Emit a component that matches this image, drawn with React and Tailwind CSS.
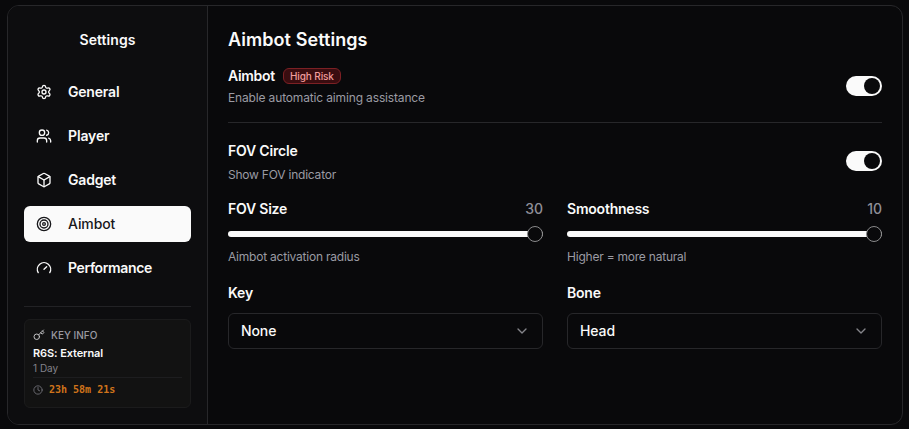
import { useState } from "react";
import { Settings, Users, Box, Target, Gauge, Key, Clock, ChevronDown } from "lucide-react";

const tabs = [
  { name: "General", icon: Settings, text: "tracking-[-0.2px]" },
  { name: "Player", icon: Users, text: "tracking-[-0.15px]" },
  { name: "Gadget", icon: Box, text: "tracking-[-0.2px]" },
  { name: "Aimbot", icon: Target, text: "tracking-[-0.1px]" },
  { name: "Performance", icon: Gauge, text: "tracking-[-0.38px]" },
];

const Toggle = ({ checked, onChange }) => (
  <button
    role="switch"
    aria-checked={checked}
    onClick={() => onChange(!checked)}
    className={`flex h-5 w-9 items-center rounded-full px-0.5 ${checked ? "justify-end bg-[#fafafa]" : "justify-start bg-[#27272a]"}`}
  >
    <span className="size-4 rounded-full bg-[#09090b]" />
  </button>
);

const SliderField = ({ label, value, max, hint }) => (
  <div className="flex flex-col">
    <div className="flex h-5 items-center justify-between text-sm">
      <span className="font-semibold tracking-[-0.22px]">{label}</span>
      <span className="font-medium text-[#8f8f98]">{value}</span>
    </div>
    <div className="relative mt-[7px] flex h-4 items-center">
      <div className="h-1.5 w-full overflow-hidden rounded-full bg-[#27272a]">
        <div className="h-full bg-[#fafafa]" style={{ width: `${(value / max) * 100}%` }} />
      </div>
      <span className="absolute right-0 size-4 rounded-full border border-[#8a8a8b] bg-[#09090b]" />
    </div>
    <p className="mt-[7px] h-4 text-xs leading-4 tracking-[-0.22px] text-[#9b9ba3]">{hint}</p>
  </div>
);

const SelectField = ({ label, value }) => (
  <div className="flex flex-col">
    <span className="h-5 text-sm leading-5 font-semibold tracking-[-0.2px]">{label}</span>
    <button className="mt-2.5 flex h-9 items-center justify-between rounded-md border border-[#27272a] px-3 text-sm font-medium tracking-[-0.1px]">
      {value}
      <ChevronDown size={16} className="text-[#85858a]" />
    </button>
  </div>
);

export default function App() {
  const [active, setActive] = useState("Aimbot");
  const [aimbot, setAimbot] = useState(true);
  const [fovCircle, setFovCircle] = useState(true);

  return (
    <div className="h-[429px] w-[909px] bg-[#09090b] pt-[5px] pl-[7px] font-['Inter',sans-serif] text-[#fafafa]">
      <div className="flex h-[420px] w-[896px] overflow-hidden rounded-xl border border-[#27272a]">
        <aside className="flex w-[200px] shrink-0 flex-col border-r border-[#27272a] bg-[#0d0d0f] px-4">
          <h2 className="mt-6 h-5 text-center text-sm leading-5 font-semibold tracking-[0.05px]">Settings</h2>
          <nav className="mt-6 flex flex-col gap-2">
            {tabs.map(({ name, icon: Icon, text }) => (
              <button
                key={name}
                onClick={() => setActive(name)}
                className={`flex h-9 items-center gap-4 rounded-md px-3 text-sm ${active === name ? "bg-[#fafafa] font-medium text-[#18181b]" : "font-semibold"}`}
              >
                <Icon size={16} />
                <span className={text}>{name}</span>
              </button>
            ))}
          </nav>
          <div className="mt-5 border-t border-[#222225] pt-3">
            <div className="flex h-[89px] flex-col rounded-md border border-[#1b1b1c] bg-[#121212] px-2 pt-[7px]">
              <div className="flex h-4 items-center gap-1.5 text-[10px] font-medium text-[#9b9ba2]">
                <Key size={12} className="text-[#c4c4c6]" />
                KEY INFO
              </div>
              <p className="mt-[2px] h-4 text-[11px] leading-4 font-semibold tracking-[-0.1px]">R6S: External</p>
              <p className="h-4 text-[10px] leading-[15px] text-[#82828a]">1 Day</p>
              <div className="flex h-6 items-center gap-1.5 border-t border-[#1d1d1f]">
                <Clock size={10} className="text-[#77777e]" />
                <span className="font-['DejaVu_Sans_Mono',monospace] text-[10px] font-bold text-[#d0741b]">23h 58m 21s</span>
              </div>
            </div>
          </div>
        </aside>

        <main className="flex grow flex-col px-5">
          <h1 className="mt-5 h-7 text-lg leading-7 font-semibold tracking-[0.07px]">Aimbot Settings</h1>
          <section className="mt-3 flex h-[57px] items-start justify-between border-b border-[#27272a]">
            <div>
              <div className="flex h-5 items-center gap-2">
                <span className="text-sm font-semibold tracking-[-0.3px]">Aimbot</span>
                <span className="flex h-4 items-center rounded-md border border-[#7c2024] bg-[#3a0d10] px-1.5 text-[10px] font-medium tracking-[-0.1px] text-[#f19c9c]">High Risk</span>
              </div>
              <p className="mt-1 text-xs leading-4 tracking-[-0.15px] text-[#9b9ba3]">Enable automatic aiming assistance</p>
            </div>
            <div className="mt-2.5">
              <Toggle checked={aimbot} onChange={setAimbot} />
            </div>
          </section>
          <section className="mt-[18px] flex h-[42px] justify-between">
            <div>
              <p className="text-sm leading-5 font-semibold tracking-[-0.2px]">FOV Circle</p>
              <p className="mt-1.5 text-xs leading-4 tracking-[-0.22px] text-[#9b9ba3]">Show FOV indicator</p>
            </div>
            <div className="mt-2.5">
              <Toggle checked={fovCircle} onChange={setFovCircle} />
            </div>
          </section>
          <div className="mt-4 grid grid-cols-2 gap-x-6 gap-y-[18px]">
            <SliderField label="FOV Size" value={30} max={30} hint="Aimbot activation radius" />
            <SliderField label="Smoothness" value={10} max={10} hint="Higher = more natural" />
            <SelectField label="Key" value="None" />
            <SelectField label="Bone" value="Head" />
          </div>
        </main>
      </div>
    </div>
  );
}
